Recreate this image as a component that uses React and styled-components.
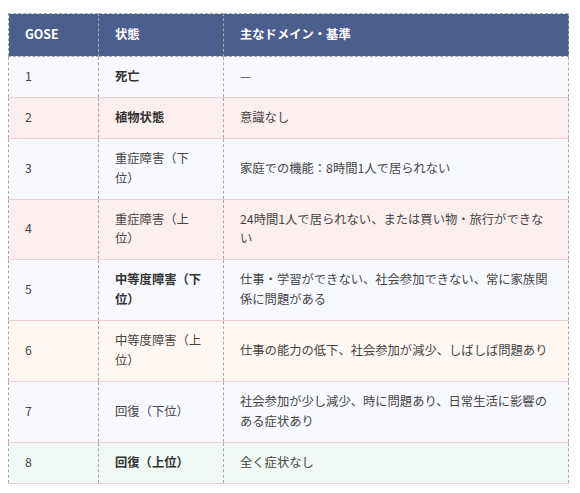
import React from 'react';
import styled, { createGlobalStyle } from 'styled-components';

const GlobalStyle = createGlobalStyle`
  body {
    margin: 0;
    background: #ffffff;
    font-family: "Noto Sans CJK JP", "Noto Sans", sans-serif;
  }
`;

const Wrapper = styled.div`
  padding: 13px 12px 0 8px;
`;

const Table = styled.table`
  width: 560px;
  border-collapse: collapse;
  table-layout: fixed;
  border: 1px dashed #a9a9a9;
  font-size: 12.3px;
  line-height: 19.9px;
  color: #454545;
`;

const Col = styled.col`
  width: ${props => props.w}px;
`;

const HeadCell = styled.th`
  background: #4a5f8d;
  color: #ffffff;
  font-weight: 700;
  text-align: left;
  padding: 11px 16px;
  border-right: 1px dashed #a9a9a9;
  border-bottom: 1px dashed #a9a9a9;
`;

const rowColors = {
  blue: '#f8f9fd',
  pink: '#fcefef',
  orange: '#fff7f1',
  green: '#f1f9f4',
};

const Row = styled.tr`
  background: ${props => rowColors[props.tone]};
`;

const Cell = styled.td`
  padding: 10px 16px;
  vertical-align: middle;
  border-right: 1px dashed #a9a9a9;
  border-bottom: 1px solid #efcfdb;
  font-weight: ${props => (props.bold ? 700 : 400)};
  color: ${props => (props.bold ? '#333333' : '#454545')};
`;

const rows = [
  { n: 1, state: '死亡', bold: true, desc: '—', tone: 'blue' },
  { n: 2, state: '植物状態', bold: true, desc: '意識なし', tone: 'pink' },
  { n: 3, state: '重症障害（下位）', desc: '家庭での機能：8時間1人で居られない', tone: 'blue' },
  { n: 4, state: '重症障害（上位）', desc: '24時間1人で居られない、または買い物・旅行ができない', tone: 'pink' },
  { n: 5, state: '中等度障害（下位）', bold: true, desc: '仕事・学習ができない、社会参加できない、常に家族関係に問題がある', tone: 'blue' },
  { n: 6, state: '中等度障害（上位）', desc: '仕事の能力の低下、社会参加が減少、しばしば問題あり', tone: 'orange' },
  { n: 7, state: '回復（下位）', desc: '社会参加が少し減少、時に問題あり、日常生活に影響のある症状あり', tone: 'blue' },
  { n: 8, state: '回復（上位）', bold: true, desc: '全く症状なし', tone: 'green' },
];

const App = () => {
  return (
    <Wrapper>
      <GlobalStyle />
      <Table>
        <colgroup>
          <Col w={90} />
          <Col w={125} />
          <Col w={345} />
        </colgroup>
        <thead>
          <tr>
            <HeadCell>GOSE</HeadCell>
            <HeadCell>状態</HeadCell>
            <HeadCell>主なドメイン・基準</HeadCell>
          </tr>
        </thead>
        <tbody>
          {rows.map(r => (
            <Row key={r.n} tone={r.tone}>
              <Cell>{r.n}</Cell>
              <Cell bold={r.bold}>{r.state}</Cell>
              <Cell>{r.desc}</Cell>
            </Row>
          ))}
        </tbody>
      </Table>
    </Wrapper>
  );
};

export default App;
